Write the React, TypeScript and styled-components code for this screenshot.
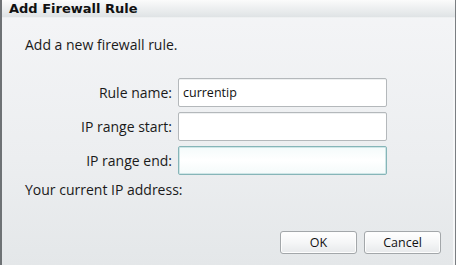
import React from "react";
import styled, { createGlobalStyle } from "styled-components";

const Global = createGlobalStyle`
  html, body { margin: 0; padding: 0; width: 456px; height: 265px; overflow: hidden; }
  body { font-family: "Open Sans", "Liberation Sans", sans-serif; }
  * { box-sizing: border-box; }
`;

const Window = styled.div`
  width: 456px;
  height: 265px;
  display: flex;
  flex-direction: column;
  border-left: 2px solid #6e7275;
  border-right: 1px solid #7a7e82;
  background: linear-gradient(to bottom, #f4f5f7 0%, #eceef0 60%, #e4e7e9 100%);
  box-shadow: inset -2px 0 0 #f6f7f8;
`;

const TitleBar = styled.div`
  height: 18px;
  display: flex;
  align-items: center;
  padding-left: 7px;
  background: linear-gradient(to bottom, #fbfbfb 0%, #eef0f1 45%, #dfe3e5 100%);
  border-bottom: 1px solid #eef0f1;
  font-family: "DejaVu Sans", Verdana, sans-serif;
  font-weight: bold;
  font-size: 13px;
  color: #111;
`;

const Body = styled.div`
  flex: 1;
  display: flex;
  flex-direction: column;
  padding: 19px 14px 11px 23px;
  font-size: 14px;
  color: #1a1a1a;
`;

const Intro = styled.div`
  height: 16px;
  line-height: 16px;
`;

const Form = styled.div`
  display: grid;
  grid-template-columns: 147px 209px;
  column-gap: 6px;
  row-gap: 5px;
  margin-top: 25px;
  align-items: center;
`;

const Label = styled.div`
  text-align: right;
  line-height: 16px;
`;

const Input = styled.div<{ $focused?: boolean }>`
  height: 29px;
  display: flex;
  align-items: center;
  padding-left: 4px;
  background: ${(p) =>
    p.$focused
      ? "linear-gradient(to bottom, #f4fbfb 0%, #ffffff 50%, #f4fafa 100%)"
      : "#ffffff"};
  border: 1px solid ${(p) => (p.$focused ? "#86b5b8" : "#b4b8bb")};
  border-radius: 2px;
  box-shadow: ${(p) =>
    p.$focused ? "inset 0 0 0 1px #cfe6e7" : "inset 0 1px 0 #eef0f1"};
  font-size: 12.5px;
  color: #111;
`;

const IpRow = styled.div`
  margin-top: 7px;
  height: 15px;
  line-height: 15px;
`;

const Footer = styled.div`
  margin-top: auto;
  display: flex;
  justify-content: flex-end;
  gap: 7px;
`;

const Button = styled.div`
  width: 77px;
  height: 23px;
  display: flex;
  align-items: center;
  justify-content: center;
  border: 1px solid #a3a7aa;
  border-radius: 3px;
  background: linear-gradient(to bottom, #ffffff 0%, #f5f6f7 50%, #e7e9eb 100%);
  box-shadow: inset 0 0 0 1px #fdfdfd;
  font-size: 12.5px;
  color: #111;
`;

export default function App() {
  return (
    <>
      <Global />
      <Window>
        <TitleBar>Add Firewall Rule</TitleBar>
        <Body>
          <Intro>Add a new firewall rule.</Intro>
          <Form>
            <Label>Rule name:</Label>
            <Input>currentip</Input>
            <Label>IP range start:</Label>
            <Input />
            <Label>IP range end:</Label>
            <Input $focused />
          </Form>
          <IpRow>Your current IP address:</IpRow>
          <Footer>
            <Button>OK</Button>
            <Button>Cancel</Button>
          </Footer>
        </Body>
      </Window>
    </>
  );
}
